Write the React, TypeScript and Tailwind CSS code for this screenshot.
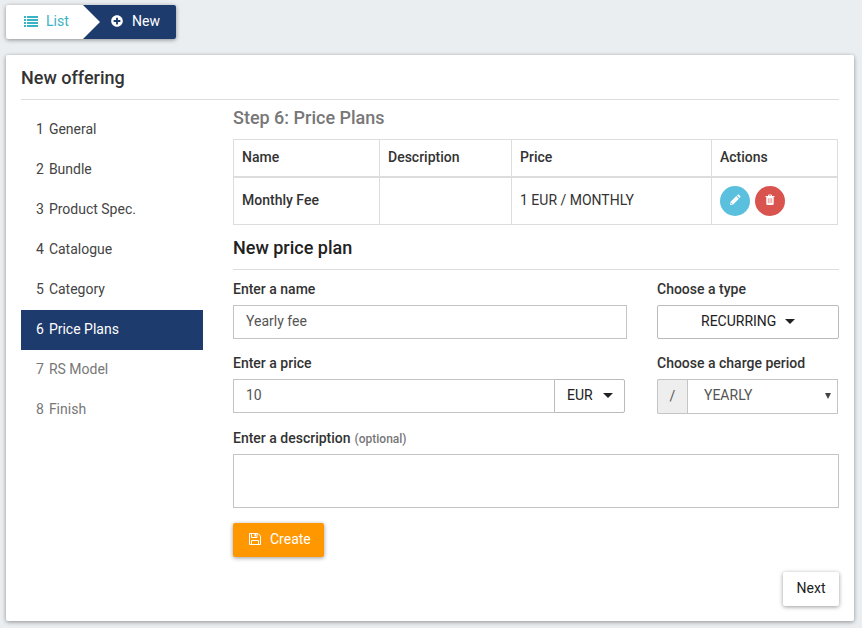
import type { ReactNode } from "react";
import { FaPlusCircle } from "react-icons/fa";

const steps = ["General", "Bundle", "Product Spec.", "Catalogue", "Category", "Price Plans", "RS Model", "Finish"];
const activeStep = 5;

function ListIcon() {
  return (
    <svg viewBox="0 0 14 11" className="h-[11px] w-[14px]" fill="currentColor" shapeRendering="crispEdges" aria-hidden="true">
      <path d="M0 0h2v2H0zM3 0h11v2H3zM0 3h2v2H0zM3 3h11v2H3zM0 6h2v2H0zM3 6h11v2H3zM0 9h2v2H0zM3 9h11v2H3z" />
    </svg>
  );
}

function PencilIcon() {
  return (
    <svg viewBox="0 0 12 12" className="size-3" fill="currentColor" aria-hidden="true">
      <path d="M1 11l.6-3.2 5.7-5.7 2.6 2.6-5.7 5.7zM8 1.4l.6-.6a1 1 0 0 1 1.3 0l1.3 1.3a1 1 0 0 1 0 1.3l-.6.6z" />
      <path d="M2.2 8.4l1.4 1.4-.9.2-.7-.7z" fill="#5bc0de" />
    </svg>
  );
}

function TrashIcon() {
  return (
    <svg viewBox="0 0 10 12" className="h-3 w-[10px]" aria-hidden="true">
      <path d="M3.500 2V1h3v1" fill="none" stroke="currentColor" />
      <path d="M.5 2h9v1h-.8v6.700a1.300 1.300 0 0 1-1.300 1.300H2.600a1.300 1.300 0 0 1-1.300-1.300V3H.5z" fill="currentColor" />
      <path d="M3.300 4.200v5M5 4.200v5M6.700 4.200v5" fill="none" stroke="#d9534f" strokeWidth=".6" />
    </svg>
  );
}

function SaveIcon() {
  return (
    <svg viewBox="0 0 12 12" className="size-3" fill="none" stroke="currentColor" strokeLinejoin="round" aria-hidden="true">
      <path d="M.5.5H9L11.500 3v8.500H.5z" />
      <path d="M2.500.5v4h5.500v-4M2.500 11.500v-4h7v4" />
      <path d="M5.500 1h1.500v2.500H5.500z" fill="currentColor" stroke="none" />
    </svg>
  );
}

function Caret() {
  return (
    <svg viewBox="0 0 10 5" className="h-[5px] w-[10px]" fill="#212121" aria-hidden="true">
      <path d="M0 0h10L5 5z" />
    </svg>
  );
}

function Field({ id, label, hint, children }: { id: string; label: string; hint?: string; children: ReactNode }) {
  return (
    <div className="mb-[14px]">
      <label htmlFor={id} className="mb-[6px] block font-medium leading-5">
        {label}
        {hint && <span className="ml-1 text-xs text-[#777]">{hint}</span>}
      </label>
      {children}
    </div>
  );
}

export default function App() {
  return (
    <div className="min-h-screen bg-[#eaeef1] pb-[7px] pl-[6px] pr-2 pt-[5px] font-[Roboto,sans-serif] text-sm text-[#333]">
      <nav className="flex h-[34px] w-fit overflow-hidden rounded-[2px] bg-white shadow-[0_1px_4px_rgba(0,0,0,0.4)]">
        <a href="#list" className="flex w-[77px] items-center gap-2 pb-[2px] pl-[18px] text-[#3ab3c4]">
          <ListIcon />
          List
        </a>
        <a href="#new" className="relative flex w-[93px] items-center gap-[9px] bg-[#1e3b6d] pb-[2px] pl-7 text-white">
          <svg viewBox="0 0 17 34" className="absolute left-0 top-0 h-full w-[17px]" fill="#fff" aria-hidden="true">
            <path d="M0 0l17 17L0 34z" />
          </svg>
          <FaPlusCircle className="size-3" aria-hidden="true" />
          New
        </a>
      </nav>

      <main className="mt-4 rounded-[2px] bg-white px-[15px] pb-[15px] pt-[10px] shadow-[0_1px_4px_rgba(0,0,0,0.4)]">
        <h1 className="border-b border-[#ddd] pb-[9px] text-lg font-medium leading-[25px]">New offering</h1>
        <div className="-mx-[15px] flex">
          <aside className="w-1/4 px-[15px] pt-[10px]">
            <ol>
              {steps.map((step, i) => (
                <li key={step}>
                  <a
                    href={"#step-" + (i + 1)}
                    className={
                      "flex h-10 items-center gap-[5px] px-[15px] pb-[2px] " +
                      (i === activeStep ? "bg-[#1e3b6d] text-white" : i > activeStep ? "text-[#777]" : "text-[#444]")
                    }
                  >
                    <span>{i + 1}</span>
                    <span>{step}</span>
                  </a>
                </li>
              ))}
            </ol>
          </aside>

          <section className="w-3/4 px-[15px] pt-[5px]">
            <h2 className="mb-[9px] text-lg font-medium leading-[25px] text-[#777]">Step 6: Price Plans</h2>
            <div className="pr-px">
              <table className="w-full table-fixed border-collapse border border-[#ddd] text-left">
                <colgroup>
                  <col className="w-[146px]" />
                  <col className="w-[132px]" />
                  <col className="w-[200px]" />
                  <col />
                </colgroup>
                <thead>
                  <tr className="h-[37px] border-b-2 border-[#ddd]">
                    <th className="border-x border-[#ddd] px-2 pb-[2px] font-medium">Name</th>
                    <th className="border-x border-[#ddd] px-2 pb-[2px] font-medium">Description</th>
                    <th className="border-x border-[#ddd] px-2 pb-[2px] font-medium">Price</th>
                    <th className="border-x border-[#ddd] px-2 pb-[2px] font-medium">Actions</th>
                  </tr>
                </thead>
                <tbody>
                  <tr className="h-12">
                    <td className="border-x border-[#ddd] px-2 pb-[2px] font-medium">Monthly Fee</td>
                    <td className="border-x border-[#ddd] px-2" />
                    <td className="border-x border-[#ddd] px-2 pb-[2px]">1 EUR / MONTHLY</td>
                    <td className="border-x border-[#ddd] px-2">
                      <div className="flex gap-[5px]">
                        <button type="button" aria-label="Edit" className="flex size-[30px] items-center justify-center rounded-full bg-[#5bc0de] pb-px text-white">
                          <PencilIcon />
                        </button>
                        <button type="button" aria-label="Delete" className="flex size-[30px] items-center justify-center rounded-full bg-[#d9534f] pb-[2px] text-white">
                          <TrashIcon />
                        </button>
                      </div>
                    </td>
                  </tr>
                </tbody>
              </table>
            </div>

            <h2 className="mb-[9px] mt-[10px] border-b border-[#ddd] pb-[9px] text-lg font-medium leading-[25px] text-[#212121]">New price plan</h2>

            <form>
              <div className="-mx-[15px] flex">
                <div className="w-2/3 px-[15px]">
                  <Field id="name" label="Enter a name">
                    <input id="name" defaultValue="Yearly fee" className="block h-[34px] w-full border border-[#c4c4c4] bg-white px-3 pb-[2px] text-[#555]" />
                  </Field>
                </div>
                <div className="w-1/3 px-[15px]">
                  <Field id="type" label="Choose a type">
                    <div className="relative">
                      <select id="type" className="block h-[34px] w-full appearance-none rounded-[2px] border border-[#bbb] bg-white pb-[2px] pl-[43px] text-[#212121]">
                        <option>RECURRING</option>
                      </select>
                      <span className="pointer-events-none absolute inset-y-0 right-11 flex items-center pb-[2px]">
                        <Caret />
                      </span>
                    </div>
                  </Field>
                </div>
              </div>

              <div className="-mx-[15px] flex">
                <div className="w-2/3 px-[15px]">
                  <Field id="price" label="Enter a price">
                    <div className="flex pr-[2px]">
                      <input id="price" defaultValue="10" className="block h-[34px] min-w-0 flex-1 border border-r-0 border-[#c4c4c4] bg-white px-3 pb-[2px] text-[#555]" />
                      <div className="relative w-[71px]">
                        <select aria-label="Currency" className="block h-[34px] w-full appearance-none rounded-r-[2px] border border-[#bbb] bg-white pb-[2px] pl-3 text-[#212121]">
                          <option>EUR</option>
                        </select>
                        <span className="pointer-events-none absolute inset-y-0 right-3 flex items-center pb-[2px]">
                          <Caret />
                        </span>
                      </div>
                    </div>
                  </Field>
                </div>
                <div className="w-1/3 px-[15px]">
                  <Field id="period" label="Choose a charge period">
                    <div className="flex pr-px">
                      <span className="flex w-[30px] items-center justify-center rounded-l-[2px] border border-r-0 border-[#c4c4c4] bg-[#eee] pb-[2px] text-[#555]">/</span>
                      <div className="relative flex-1">
                        <select id="period" className="block h-[35px] w-full appearance-none border border-[#c4c4c4] bg-white pb-[3px] pl-4 text-[#555]">
                          <option>YEARLY</option>
                        </select>
                        <span className="pointer-events-none absolute inset-y-0 right-[7px] flex items-center pb-[2px]">
                          <svg viewBox="0 0 6 6" className="size-[6px]" fill="#444" aria-hidden="true">
                            <path d="M0 0h6L3 6z" />
                          </svg>
                        </span>
                      </div>
                    </div>
                  </Field>
                </div>
              </div>

              <Field id="description" label="Enter a description" hint="(optional)">
                <textarea id="description" className="block h-[54px] w-full resize-none border border-[#c4c4c4] bg-white px-3 py-[6px] text-[#555]" />
              </Field>

              <button type="button" className="mt-[15px] flex h-[34px] items-center gap-[9px] rounded-[2px] bg-[#ff9800] pb-[2px] pl-4 pr-[13px] text-white shadow-[0_1px_4px_rgba(0,0,0,0.4)]">
                <SaveIcon />
                Create
              </button>
            </form>
          </section>
        </div>
        <div className="mt-[15px] flex justify-end">
          <button type="button" className="h-[34px] w-14 rounded-[2px] bg-white pb-[2px] text-[#212121] shadow-[0_1px_4px_rgba(0,0,0,0.4)]">
            Next
          </button>
        </div>
      </main>
    </div>
  );
}
